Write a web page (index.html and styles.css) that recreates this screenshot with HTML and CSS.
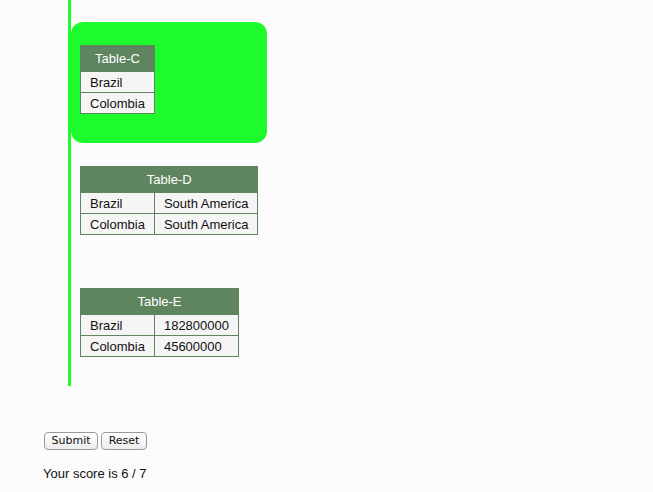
FILE: index.html
```html
<!DOCTYPE html>
<html>
<head>
<meta charset="utf-8">
<link rel="stylesheet" href="styles.css">
</head>
<body>
<div class="track">
  <div class="bucket">
    <table class="tbl">
      <tr><th>Table-C</th></tr>
      <tr><td>Brazil</td></tr>
      <tr><td>Colombia</td></tr>
    </table>
  </div>
  <table class="tbl tbl-d">
    <tr><th colspan="2">Table-D</th></tr>
    <tr><td>Brazil</td><td>South America</td></tr>
    <tr><td>Colombia</td><td>South America</td></tr>
  </table>
  <table class="tbl tbl-e">
    <tr><th colspan="2">Table-E</th></tr>
    <tr><td>Brazil</td><td>182800000</td></tr>
    <tr><td>Colombia</td><td>45600000</td></tr>
  </table>
</div>
<div class="actions">
  <button class="btn btn-submit">Submit</button><button class="btn btn-reset">Reset</button>
</div>
<p class="score">Your score is 6 / 7</p>
</body>
</html>
```
FILE: styles.css
```css
html, body {
  margin: 0;
  padding: 0;
  background: #fbfbfb;
  font-family: "Liberation Sans", Arial, sans-serif;
  font-size: 13px;
  color: #111;
}
.track {
  margin-left: 68px;
  border-left: 3px solid #1efb2c;
  height: 386px;
  display: flex;
  flex-direction: column;
  align-items: flex-start;
}
.bucket {
  margin-top: 22px;
  width: 196px;
  height: 121px;
  box-sizing: border-box;
  padding: 23px 9px;
  background: #1efb2c;
  border-radius: 12px;
}
.tbl {
  border-collapse: collapse;
  background: #f5f5f5;
}
.tbl th {
  background: #5f855f;
  color: #fff;
  font-weight: normal;
  padding: 5px 10px 5px;
  line-height: 15px;
  border: 1px solid #5f855f;
  text-align: center;
}
.tbl td {
  padding: 3px 9px 2px 9px;
  line-height: 15px;
  border: 1px solid #5f855f;
  text-align: left;
  white-space: nowrap;
}
.tbl-d {
  margin-top: 23px;
  margin-left: 9px;
}
.tbl-e {
  margin-top: 53px;
  margin-left: 9px;
}
.actions {
  margin-top: 46px;
  margin-left: 44px;
  display: flex;
  gap: 3px;
}
.btn {
  font-family: "DejaVu Sans", sans-serif;
  font-size: 11px;
  height: 18px;
  padding: 0;
  border: 1px solid #9a9a9a;
  border-radius: 4px;
  background: linear-gradient(#ffffff, #ececec);
  color: #111;
  line-height: 16px;
  text-align: center;
}
.btn-submit {
  width: 54px;
}
.btn-reset {
  width: 46px;
}
.score {
  margin: 16px 0 0 43px;
  line-height: 15px;
}
```
